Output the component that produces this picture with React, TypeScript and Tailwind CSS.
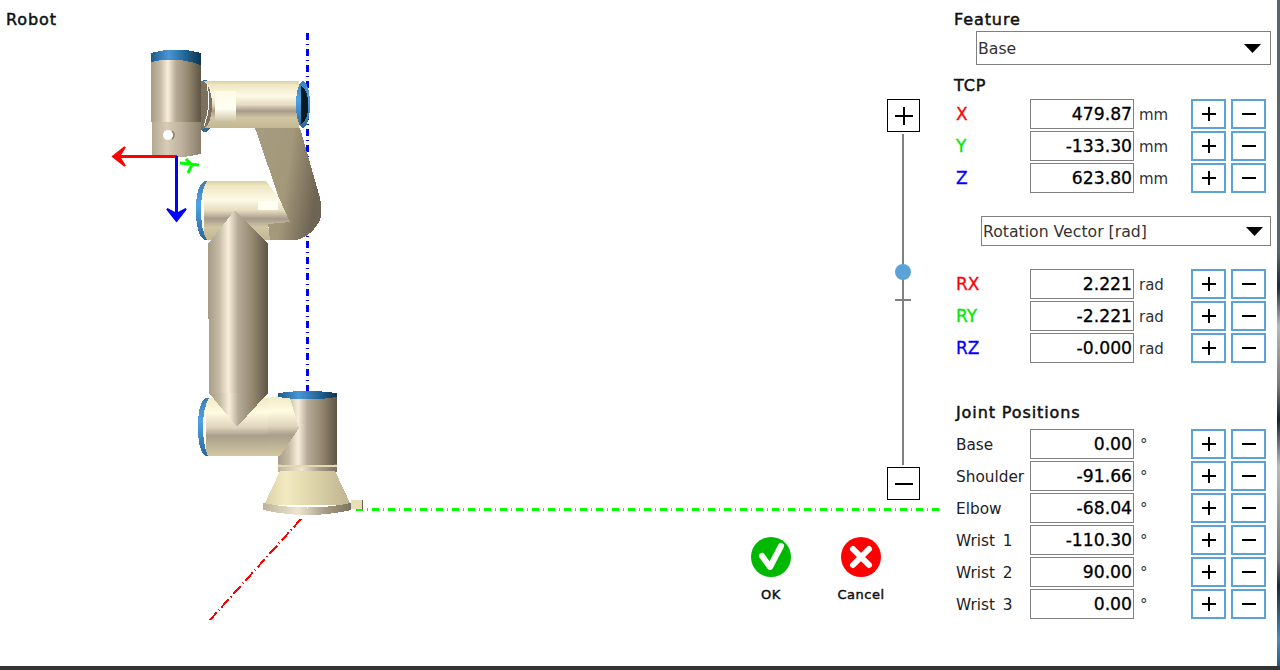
import type { ReactNode } from "react";

const heading = "text-[16px] leading-5 tracking-[0.9px] text-[#111] [-webkit-text-stroke:0.5px_#111]";
const colored = "text-[17px] [-webkit-text-stroke:0.3px_currentColor]";

function StepIcon({ minus, size = 14 }: { minus?: boolean; size?: number }) {
  const mid = size / 2;
  return (
    <svg width={size} height={size} viewBox={`0 0 ${size} ${size}`}>
      <line x1="0" y1={mid} x2={size} y2={mid} stroke="#000" strokeWidth="2" />
      {!minus && <line x1={mid} y1="0" x2={mid} y2={size} stroke="#000" strokeWidth="2" />}
    </svg>
  );
}

function StepButton({ minus }: { minus?: boolean }) {
  return (
    <button className="flex h-[30px] w-[35px] items-center justify-center border-2 border-[#5ba3d6] bg-white">
      <StepIcon minus={minus} />
    </button>
  );
}

type RowProps = { label: string; value: string; unit: string; labelClass?: string };

function ValueRow({ label, value, unit, labelClass }: RowProps) {
  return (
    <div className="flex h-[30px] items-center">
      <div className={`mt-[2px] ml-[2px] w-[74px] whitespace-nowrap ${labelClass ?? "text-[15.3px] text-[#222] [word-spacing:3px]"}`}>
        {label}
      </div>
      <div className="h-[30px] w-[104px] border border-[#808080] pr-[1px] text-right text-[17.2px] leading-[28px] text-black [-webkit-text-stroke:0.3px_#000]">
        {value}
      </div>
      <div className={`mt-[2px] ml-[5px] w-[52px] text-[15px] text-[#333] ${unit === "°" ? "pl-[1px]" : ""}`}>{unit}</div>
      <div className="flex gap-[5px]">
        <StepButton />
        <StepButton minus />
      </div>
    </div>
  );
}

function Select({ text, className, arrow }: { text: string; className: string; arrow: string }) {
  return (
    <div className={`flex items-center justify-between border border-[#808080] pl-[1px] text-[15.7px] text-[#333] ${className}`}>
      <span className="mt-[2px]">{text}</span>
      <svg width="17" height="9" viewBox="0 0 17 9" className={arrow}>
        <polygon points="0,0 17,0 8.5,9" fill="#000" />
      </svg>
    </div>
  );
}

function RoundAction({ label, children, fill }: { label: string; children: ReactNode; fill: string }) {
  return (
    <div className="flex w-[50px] flex-col items-center">
      <svg width="40" height="40" viewBox="0 0 40 40">
        <circle cx="20" cy="20" r="20" fill={fill} />
        {children}
      </svg>
      <div className="mt-[9px] text-[13px] leading-[18px] tracking-[0.5px] whitespace-nowrap text-[#111] [-webkit-text-stroke:0.45px_#111]">
        {label}
      </div>
    </div>
  );
}

function RobotDrawing() {
  return (
    <svg width="954" height="666" viewBox="0 0 954 666" className="absolute top-0 left-0">
      <defs>
        <linearGradient id="tan" x1="0" x2="1" y1="0" y2="0">
          <stop offset="0" stopColor="#a69b86" />
          <stop offset="0.18" stopColor="#c4b9a2" />
          <stop offset="0.34" stopColor="#f8eedb" />
          <stop offset="0.5" stopColor="#b6ab97" />
          <stop offset="0.75" stopColor="#92866f" />
          <stop offset="1" stopColor="#5f5545" />
        </linearGradient>
        <linearGradient id="tanSoft" x1="0" x2="1" y1="0" y2="0">
          <stop offset="0" stopColor="#b3a893" />
          <stop offset="0.3" stopColor="#d8ccb6" />
          <stop offset="0.6" stopColor="#bdb29d" />
          <stop offset="1" stopColor="#8a7f6b" />
        </linearGradient>
        <linearGradient id="link" x1="0" x2="0" y1="0" y2="1">
          <stop offset="0" stopColor="#d8cfa6" />
          <stop offset="0.08" stopColor="#efe6c2" />
          <stop offset="0.32" stopColor="#fdfae6" />
          <stop offset="0.5" stopColor="#e6dcc0" />
          <stop offset="0.64" stopColor="#a69b8a" />
          <stop offset="0.78" stopColor="#d0c6a4" />
          <stop offset="1" stopColor="#c2b791" />
        </linearGradient>
        <linearGradient id="linkBright" x1="0" x2="0" y1="0" y2="1">
          <stop offset="0" stopColor="#fffbe6" />
          <stop offset="0.6" stopColor="#fffef2" />
          <stop offset="1" stopColor="#cfc4a6" />
        </linearGradient>
        <linearGradient id="wedge" x1="0" x2="0" y1="0" y2="1">
          <stop offset="0" stopColor="#f2e9c4" />
          <stop offset="0.25" stopColor="#fffbe2" />
          <stop offset="0.5" stopColor="#e0d5bd" />
          <stop offset="0.65" stopColor="#a99e8b" />
          <stop offset="1" stopColor="#d2c8a2" />
        </linearGradient>
        <linearGradient id="elbow" x1="0" x2="1" y1="0" y2="0.25">
          <stop offset="0" stopColor="#a69c80" />
          <stop offset="0.55" stopColor="#a39879" />
          <stop offset="1" stopColor="#6e6453" />
        </linearGradient>
        <linearGradient id="cap" x1="0" x2="1" y1="0" y2="0">
          <stop offset="0" stopColor="#1d5c8a" />
          <stop offset="0.35" stopColor="#4a96d6" />
          <stop offset="0.7" stopColor="#1f6494" />
          <stop offset="1" stopColor="#0f3350" />
        </linearGradient>
        <linearGradient id="capSide" x1="0" x2="0" y1="0" y2="1">
          <stop offset="0" stopColor="#3d7fb0" />
          <stop offset="0.4" stopColor="#4da3e6" />
          <stop offset="1" stopColor="#2c689a" />
        </linearGradient>
        <linearGradient id="flare" x1="0" x2="1" y1="0" y2="0">
          <stop offset="0" stopColor="#d9cfa6" />
          <stop offset="0.25" stopColor="#f3eac2" />
          <stop offset="0.5" stopColor="#e3d9ae" />
          <stop offset="1" stopColor="#bdb28e" />
        </linearGradient>
        <linearGradient id="foot" x1="0" x2="1" y1="0" y2="0">
          <stop offset="0" stopColor="#bdb39c" />
          <stop offset="0.4" stopColor="#f0e6d0" />
          <stop offset="0.7" stopColor="#a89d88" />
          <stop offset="1" stopColor="#7d7260" />
        </linearGradient>
      </defs>

      {/* world axes */}
      <g shapeRendering="crispEdges">
        <line x1="307.5" y1="33" x2="307.5" y2="392" stroke="#0000ff" strokeWidth="3" strokeDasharray="7 4 1 4" />
        <line x1="356" y1="509.5" x2="940" y2="509.5" stroke="#00ff00" strokeWidth="3" strokeDasharray="7 4 1 4" />
        <line x1="301" y1="519" x2="210" y2="620" stroke="#ff0000" strokeWidth="2" strokeDasharray="11 3 1 3" />
      </g>

      <g shapeRendering="crispEdges">
        {/* forearm */}
        <path d="M255 128 L300 128 L320 198 Q323 212 320 220 Q312 236 296 240 L270 240 L268 222 L290 222 L279 198 Z" fill="url(#elbow)" />
        <ellipse cx="205" cy="106" rx="10" ry="26" fill="#2f6a98" />
        <rect x="202" y="81" width="97" height="47" fill="url(#link)" />
        <rect x="215" y="91" width="21" height="30" fill="url(#linkBright)" />
        <ellipse cx="202" cy="105" rx="10" ry="24" fill="#7c705e" />
        <path d="M207 85 Q212 105 204 126" fill="none" stroke="#fff" strokeWidth="1" />
        <ellipse cx="303" cy="104.5" rx="7" ry="23.5" fill="url(#capSide)" />
        <path d="M301 85 Q309 92 308 105 Q309 118 301 125 Z" fill="#0a1a22" />

        {/* wrist */}
        <path d="M152 122 L201 122 L201 154 Q177 160 152 155 Z" fill="url(#tanSoft)" />
        <rect x="151" y="58" width="50" height="64" fill="url(#tan)" />
        <path d="M151 62 L151 53 Q176 46 201 53 L201 65 Q176 56 151 62 Z" fill="url(#cap)" />

        {/* elbow */}
        <path d="M204 181 L266 181 L279 198 L290 222 L268 224 L270 240 L204 240 Z" fill="url(#link)" />
        <rect x="258" y="201" width="20" height="9" fill="#fffef2" />
        <path d="M205 181 Q196 184 196 210 Q196 236 205 240 L207 240 Q201 230 201 210 Q201 190 207 181 Z" fill="url(#capSide)" />

        {/* upper arm */}
        <rect x="206" y="398" width="64" height="58" fill="url(#wedge)" />
        <path d="M206 398 Q198 402 198 427 Q198 452 206 456 L208 456 Q203 445 203 427 Q203 408 209 398 Z" fill="url(#capSide)" />
        <path d="M235 210 L268 244 L268 393 L209 393 L208 244 Z" fill="url(#tan)" />
        <path d="M209 393 L268 393 L237 427 Z" fill="url(#tan)" />

        {/* base */}
        <path d="M278 396 L337 396 L337 464 Q308 470 278 464 Z" fill="url(#tan)" />
        <path d="M278 396 L290 398 L299 428 L280 456 L268 456 L268 398 Z" fill="url(#wedge)" />
        <path d="M278 393 Q308 389 337 393 L337 397 Q308 402 278 397 Z" fill="url(#cap)" />
        <path d="M278 464 Q308 470 337 464 L337 472 Q308 476 278 472 Z" fill="url(#foot)" />
        <rect x="278" y="465" width="59" height="2" fill="#e3d9b0" />
        <path d="M280 471 L335 471 L351 505 L264 505 Z" fill="url(#flare)" />
        <path d="M263 503 Q308 512 351 503 L351 510 Q308 520 263 510 Z" fill="url(#foot)" />
        <rect x="351" y="500" width="12" height="9" fill="#e8dfb8" />
        <rect x="362" y="500" width="1" height="9" fill="#6b6250" />
      </g>

      <circle cx="168" cy="135" r="5" fill="#fff" />
      <path d="M172 131 A5 5 0 0 1 172 139" fill="none" stroke="#8a7f6b" strokeWidth="1.5" />

      {/* tool axes */}
      <line x1="114" y1="156.5" x2="177" y2="156.5" stroke="#ff0000" strokeWidth="3" />
      <path d="M125 147 L113 156.5 L125 166 L119 156.5 Z" fill="#ff0000" stroke="#ff0000" strokeWidth="2" />
      <line x1="176.5" y1="156" x2="176.5" y2="220" stroke="#0000ff" strokeWidth="3" />
      <path d="M167 209 L176.5 221 L186 209 L176.5 214 Z" fill="#0000ff" stroke="#0000ff" strokeWidth="2" />
      <path d="M180 163 L199 165 M186 159 L192 165 L188 173" fill="none" stroke="#00ff00" strokeWidth="3" />
    </svg>
  );
}

export default function App() {
  return (
    <div className="flex h-[670px] w-[1280px] flex-col overflow-hidden bg-white font-['DejaVu_Sans',sans-serif]">
      <div className="flex min-h-0 flex-1">
        {/* 3D view with the slider and dialog actions on top */}
        <div className="relative flex w-[954px]">
          <RobotDrawing />
          <div className={`relative flex-1 pt-[10px] pl-[6px] ${heading}`}>Robot</div>
          <div className="relative mt-[537px] flex gap-[40px]">
            <RoundAction label="OK" fill="#00b800">
              <path d="M11 19 L19 30 L30 9" fill="none" stroke="#fff" strokeWidth="6" strokeLinecap="round" strokeLinejoin="round" />
            </RoundAction>
            <RoundAction label="Cancel" fill="#ff0000">
              <path d="M12 12 L28 28 M28 12 L12 28" fill="none" stroke="#fff" strokeWidth="6" strokeLinecap="round" />
            </RoundAction>
          </div>
          <div className="relative mt-[99px] mr-[34px] ml-[1px] flex h-[401px] w-[33px] flex-col">
            <div className="flex h-[33px] w-[33px] items-center justify-center border-[1.5px] border-black">
              <StepIcon size={18} />
            </div>
            <div className="relative my-[2px] ml-[15px] w-[2px] flex-1 bg-[#808080]">
              <div className="absolute top-[130px] -left-[7px] h-4 w-4 rounded-full bg-[#5ba3d6]" />
              <div className="absolute top-[165px] -left-[7px] h-[1.5px] w-4 bg-[#808080]" />
            </div>
            <div className="flex h-[33px] w-[33px] items-center justify-center border-[1.5px] border-black">
              <StepIcon minus size={18} />
            </div>
          </div>
        </div>

        {/* coordinates panel */}
        <div className="flex-1 pt-[10px]">
          <div className={heading}>Feature</div>
          <Select text="Base" className="mt-[1px] ml-[22px] h-[34px] w-[295px]" arrow="mr-[9px]" />

          <div className={`mt-[11px] ${heading}`}>TCP</div>
          <div className="mt-[3px] flex flex-col gap-[2px]">
            <ValueRow label="X" value="479.87" unit="mm" labelClass={`${colored} text-[#ff0000]`} />
            <ValueRow label="Y" value="-133.30" unit="mm" labelClass={`${colored} text-[#00e800]`} />
            <ValueRow label="Z" value="623.80" unit="mm" labelClass={`${colored} text-[#0000ff]`} />
          </div>

          <Select text="Rotation Vector [rad]" className="mt-[23px] ml-[27px] h-[30px] w-[290px]" arrow="mr-[7px]" />
          <div className="mt-[23px] flex flex-col gap-[2px]">
            <ValueRow label="RX" value="2.221" unit="rad" labelClass={`${colored} text-[#ff0000]`} />
            <ValueRow label="RY" value="-2.221" unit="rad" labelClass={`${colored} text-[#00e800]`} />
            <ValueRow label="RZ" value="-0.000" unit="rad" labelClass={`${colored} text-[#0000ff]`} />
          </div>

          <div className={`mt-[40px] ml-[2px] ${heading}`}>Joint Positions</div>
          <div className="mt-[6px] flex flex-col gap-[2px]">
            <ValueRow label="Base" value="0.00" unit="°" />
            <ValueRow label="Shoulder" value="-91.66" unit="°" />
            <ValueRow label="Elbow" value="-68.04" unit="°" />
            <ValueRow label="Wrist 1" value="-110.30" unit="°" />
            <ValueRow label="Wrist 2" value="90.00" unit="°" />
            <ValueRow label="Wrist 3" value="0.00" unit="°" />
          </div>
        </div>

        {/* desktop showing through at the window edge */}
        <div className="w-[3px] bg-[linear-gradient(180deg,#5b6468_0%,#5b6468_38%,#1a2a33_43%,#b8b8b8_49%,#777_58%,#16222b_63%,#bbb_70%,#777_84%,#1a2a33_88%,#4a8ab8_96%,#2a5a80_100%)]" />
      </div>
      <div className="h-[4px] bg-[#333]" />
    </div>
  );
}
